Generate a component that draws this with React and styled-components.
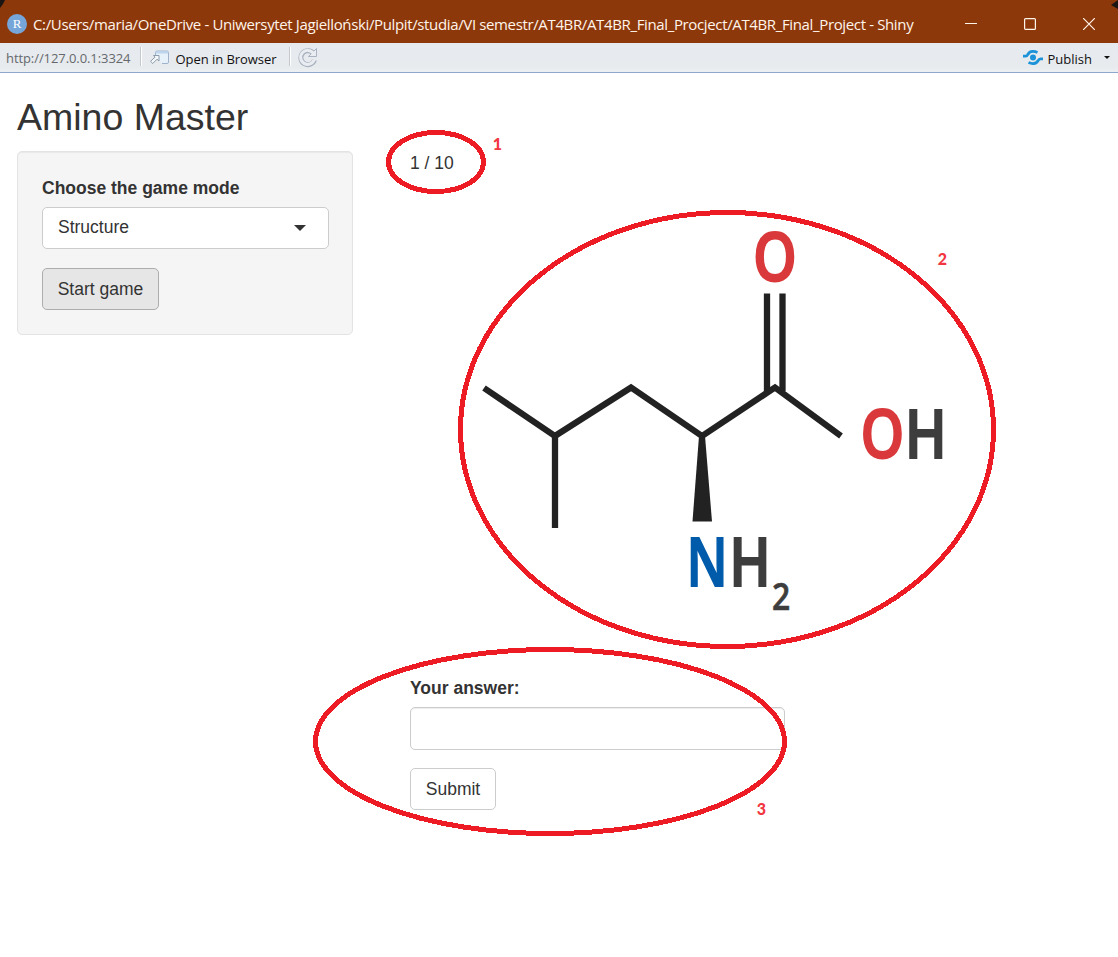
import React from "react";
import styled, { createGlobalStyle } from "styled-components";

const GlobalStyle = createGlobalStyle`
  *, *::before, *::after { box-sizing: border-box; }
  body { margin: 0; background: #fff; overflow: hidden; }
  button, input { font: inherit; color: inherit; }
`;

const Window = styled.div`
  position: relative;
  width: 1118px;
  height: 957px;
  display: flex;
  flex-direction: column;
  background: #fff;
  font-family: "Liberation Sans", Arial, sans-serif;
  font-size: 17.5px;
  line-height: 25px;
  color: #333;
`;

const TitleBar = styled.header`
  height: 43px;
  flex: none;
  display: flex;
  align-items: center;
  padding: 5px 23px 0 7px;
  background: #8d380b;
  color: #fff4ea;
  font-family: "Open Sans", "Noto Sans", sans-serif;
`;

const AppBadge = styled.span`
  width: 20px;
  height: 20px;
  border-radius: 50%;
  background: #75a5d9;
  color: #fff;
  font: 13px/19px "Liberation Serif", serif;
  text-align: center;
`;

const WindowTitle = styled.span`
  margin-left: 6px;
  font-size: 15px;
  line-height: 20px;
  letter-spacing: -0.36px;
  white-space: nowrap;
`;

const WindowControls = styled.div`
  margin-left: auto;
  display: flex;
  gap: 47px;
  svg { display: block; }
`;

const ToolBar = styled.nav`
  height: 30px;
  flex: none;
  display: flex;
  align-items: center;
  padding: 0 8px 0 6px;
  background: linear-gradient(#e6e9ee, #e8ebee 24px, #edf0f3);
  border-bottom: 1px solid #8fa6cd;
  font-family: "Open Sans", "Noto Sans", sans-serif;
  font-size: 13px;
  line-height: 18px;
  color: #111;
  white-space: nowrap;
  svg { display: block; }
`;

const Address = styled.span`
  width: 125px;
  color: #65696d;
  letter-spacing: ${(p) => p.$spacing};
`;

const Divider = styled.i`
  width: 2px;
  height: 19px;
  margin: 0 ${(p) => p.$after}px 3px ${(p) => p.$before}px;
  background: #c4c8cc;
  border-right: 1px solid #fff;
`;

const ToolLabel = styled.span`
  margin-left: ${(p) => p.$gap}px;
  padding-top: 2px;
  letter-spacing: ${(p) => p.$spacing};
`;

const Publish = styled.div`
  margin-left: auto;
  display: flex;
  align-items: center;
`;

const Caret = styled.i`
  border: solid transparent;
  border-width: ${(p) => p.$size}px ${(p) => p.$size}px 0;
  border-top-color: ${(p) => p.$color};
  margin-left: ${(p) => p.$gap || 0}px;
`;

const Page = styled.main`
  padding: 24px 17px 0;
`;

const Heading = styled.h1`
  margin: 0 0 13px;
  font-size: 37.5px;
  line-height: 41px;
  font-weight: 400;
`;

const Columns = styled.div`
  display: flex;
  align-items: flex-start;
`;

const Well = styled.form`
  width: 336px;
  height: 184px;
  padding: 24px 23px 0 24px;
  background: #f5f5f5;
  border: 1px solid #e3e3e3;
  border-radius: 5px;
  box-shadow: inset 0 1px 1px rgba(0, 0, 0, 0.05);
`;

const Label = styled.label`
  display: block;
  margin-bottom: 6px;
  font-weight: 700;
`;

const Select = styled.div`
  height: 42px;
  display: flex;
  align-items: center;
  justify-content: space-between;
  padding: 0 22px 1px 15px;
  background: #fff;
  border: 1px solid #ccc;
  border-radius: 5px;
`;

const Button = styled.button`
  display: block;
  height: 42px;
  width: ${(p) => p.$width}px;
  margin-top: ${(p) => p.$top}px;
  padding: 0;
  border: 1px solid ${(p) => (p.$active ? "#adadad" : "#ccc")};
  border-radius: 5px;
  background: ${(p) => (p.$active ? "#e6e6e6" : "#fff")};
`;

const Game = styled.section`
  margin-left: 57px;
`;

const Molecule = styled.svg`
  display: block;
  margin: 20px 0 40px 66px;
`;

const AnswerInput = styled.input`
  display: block;
  width: 375px;
  height: 43px;
  padding: 7px 15px;
  border: 1px solid #ccc;
  border-radius: 5px;
  box-shadow: inset 0 1px 1px rgba(0, 0, 0, 0.075);
  outline: none;
`;

const Annotations = styled.svg`
  position: absolute;
  inset: 0;
  pointer-events: none;
`;

function Atom({ x, y, sx = 1, size = 67.5, color, children }) {
  return (
    <text
      transform={`translate(${x} ${y}) scale(${sx} 1)`}
      textAnchor="middle"
      fontFamily="Open Sans, Noto Sans, sans-serif"
      fontWeight="600"
      fontSize={size}
      fill={color}
      stroke={color}
      strokeWidth={size > 50 ? 1.8 : 0.6}
    >
      {children}
    </text>
  );
}

function Leucine() {
  return (
    <Molecule width="480" height="440" viewBox="476 196 480 440">
      <g fill="none" stroke="#222" strokeWidth="6.3">
        <path d="M484 388 555 436 631 387.500 702 436 775 387.500 841 436" />
        <path d="M555 436V528" />
        <path d="M767 293.500V391M782.500 293.500V391" />
      </g>
      <path d="M699 436h6L712 521.500h-19.500Z" fill="#222" />
      <Atom x={775} y={280.500} sx={0.825} color="#da393b">O</Atom>
      <Atom x={882.500} y={458} sx={0.825} color="#da393b">O</Atom>
      <Atom x={925.700} y={458} sx={0.83} color="#3d3d3d">H</Atom>
      <Atom x={707} y={585.500} sx={0.78} color="#005bab">N</Atom>
      <Atom x={750} y={585.500} sx={0.82} color="#3d3d3d">H</Atom>
      <Atom x={781} y={610} sx={0.84} size={38} color="#3d3d3d">2</Atom>
    </Molecule>
  );
}

export default function App() {
  return (
    <Window>
      <GlobalStyle />
      <TitleBar>
        <AppBadge>R</AppBadge>
        <WindowTitle>
          C:/Users/maria/OneDrive - Uniwersytet Jagielloński/Pulpit/studia/VI semestr/AT4BR/AT4BR_Final_Procject/AT4BR_Final_Project - Shiny
        </WindowTitle>
        <WindowControls>
          <svg width="12" height="12" stroke="#fff4ea"><path d="M0 5.500h12" /></svg>
          <svg width="12" height="12" fill="none" stroke="#fff4ea" strokeWidth="1.200"><rect x=".6" y=".6" width="10.800" height="10.800" rx="1" /></svg>
          <svg width="12" height="12" stroke="#fff4ea" strokeWidth="1.200"><path d="M0 0 12 12M12 0 0 12" /></svg>
        </WindowControls>
      </TitleBar>
      <ToolBar>
        <Address $spacing="-0.08px">http://127.0.0.1:3324</Address>
        <Divider $before={9} $after={8} />
        <svg width="19" height="15" fill="none">
          <path d="M5.500 6V2.500q0-1.500 1.500-1.500h10q1.500 0 1.500 1.500v9.500q0 1.500-1.500 1.500h-5" fill="#e7f1fa" stroke="#9fb4cc" />
          <path d="M6 2.500h12" stroke="#bcd5ee" strokeWidth="2" />
          <path d="M3.500 5.500h5.500v5.500L7 9.200 2.800 13.500 .5 11.300 5 7.200Z" fill="#f5f8fb" stroke="#8d9cab" />
        </svg>
        <ToolLabel $gap={6.5} $spacing="-0.05px">Open in Browser</ToolLabel>
        <Divider $before={12} $after={7} />
        <svg width="20" height="20" viewBox="0 0 20 20">
          <path d="M15.500 5.500A7 7 0 1 0 16.500 12" fill="none" stroke="#a9b2c0" strokeWidth="5" />
          <path d="M18.500 0.500v8h-8Z" fill="#e9ecf0" stroke="#a9b2c0" />
          <path d="M15.500 5.500A7 7 0 1 0 16.300 11.600" fill="none" stroke="#e9ecf0" strokeWidth="3" />
        </svg>
        <Publish>
          <svg width="20" height="15" viewBox="0 0 20 15" fill="none" stroke="#1c92d8" strokeWidth="2.800">
            <circle cx="10" cy="7.500" r="3" fill="#1c92d8" stroke="none" />
            <path d="M0 6.200H2.500Q4 6.200 4.800 4.500 7.500-.4 14.500 2.500" />
            <path d="M20 8.800H17.500Q16 8.800 15.200 10.500 12.500 15.400 5.500 12.500" />
          </svg>
          <ToolLabel $gap={5} $spacing="0px">Publish</ToolLabel>
          <Caret $size={3.500} $color="#111" $gap={12} />
        </Publish>
      </ToolBar>
      <Page>
        <Heading>Amino Master</Heading>
        <Columns>
          <Well>
            <Label>Choose the game mode</Label>
            <Select>
              Structure
              <Caret $size={6} $color="#333" />
            </Select>
            <Button type="button" $active $width={117} $top={19}>Start game</Button>
          </Well>
          <Game>
            <div>1 / 10</div>
            <Leucine />
            <Label htmlFor="answer">Your answer:</Label>
            <AnswerInput id="answer" />
            <Button type="button" $width={86} $top={18}>Submit</Button>
          </Game>
        </Columns>
      </Page>
      <Annotations width="1118" height="957">
        <path d="M0 0H5L3 4 0 8ZM1118 0V9L1111 5Z" fill="#1b1513" />
        <g fill="none" stroke="#ed1c24" strokeWidth="5" shapeRendering="crispEdges">
          <ellipse cx="436" cy="162" rx="47.500" ry="29.500" />
          <ellipse cx="727" cy="429.500" rx="266.500" ry="217" />
          <ellipse cx="550" cy="741.500" rx="234.500" ry="92" />
        </g>
        <g fill="#f2363f" fontFamily="Lato, Noto Sans, sans-serif" fontWeight="900" fontSize="16" textAnchor="middle">
          <text x="497.500" y="149.500">1</text>
          <text x="942.500" y="264.500">2</text>
          <text x="761.500" y="814.500">3</text>
        </g>
      </Annotations>
    </Window>
  );
}
